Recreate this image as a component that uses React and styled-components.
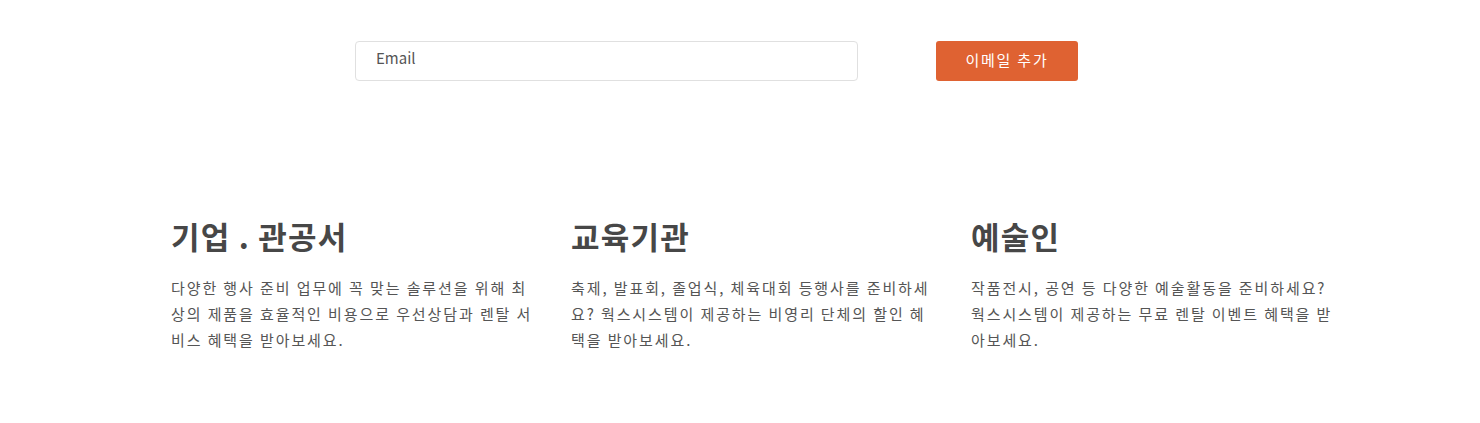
import React from "react";
import styled, { createGlobalStyle } from "styled-components";

const Global = createGlobalStyle`
  html, body { margin: 0; padding: 0; background: #fff; }
  body { font-family: "Noto Sans CJK KR", "Noto Sans", sans-serif; color: #555; }
  * { box-sizing: border-box; }
`;

const Page = styled.div`
  width: 1480px;
  height: 423px;
  display: flex;
  flex-direction: column;
  align-items: center;
`;

const Container = styled.div`
  width: 1200px;
`;

const SubscribeRow = styled.form`
  margin: 41px 0 0;
  padding-left: 215px;
  display: flex;
  align-items: center;
  gap: 78px;
`;

const EmailInput = styled.input`
  width: 503px;
  height: 40px;
  border: 1px solid #e0e0e0;
  border-radius: 4px;
  padding: 0 20px 8px;
  font-family: "Noto Sans CJK KR", "Noto Sans", sans-serif;
  font-size: 15px;
  color: #555;
  outline: none;
  &::placeholder { color: #555; }
`;

const AddButton = styled.button`
  width: 142px;
  height: 40px;
  border: none;
  border-radius: 3px;
  background: #df6232;
  color: #fff;
  font-family: "Noto Sans CJK KR", "Noto Sans", sans-serif;
  font-size: 15px;
  letter-spacing: 1.8px;
  padding: 0 0 4px;
  cursor: pointer;
`;

const Columns = styled.div`
  margin-top: 133px;
  padding-left: 31px;
  display: grid;
  grid-template-columns: repeat(3, 400px);
`;

const Column = styled.div`
  width: 370px;
`;

const Title = styled.h3`
  margin: 0 0 17px;
  font-size: 31px;
  font-weight: 700;
  letter-spacing: 1.2px;
  color: #474747;
  line-height: 44px;
`;

const Desc = styled.p`
  margin: 0;
  font-size: 15px;
  letter-spacing: 1.9px;
  line-height: 26px;
  color: #555;
`;

const items = [
  {
    title: "기업 . 관공서",
    desc: "다양한 행사 준비 업무에 꼭 맞는 솔루션을 위해 최상의 제품을 효율적인 비용으로 우선상담과 렌탈 서비스 혜택을 받아보세요.",
  },
  {
    title: "교육기관",
    desc: "축제, 발표회, 졸업식, 체육대회 등행사를 준비하세요? 웍스시스템이 제공하는 비영리 단체의 할인 혜택을 받아보세요.",
  },
  {
    title: "예술인",
    desc: "작품전시, 공연 등 다양한 예술활동을 준비하세요? 웍스시스템이 제공하는 무료 렌탈 이벤트 혜택을 받아보세요.",
  },
];

export default function App() {
  return (
    <>
      <Global />
      <Page>
        <Container>
          <SubscribeRow onSubmit={(e) => e.preventDefault()}>
            <EmailInput type="email" placeholder="Email" />
            <AddButton type="submit">이메일 추가</AddButton>
          </SubscribeRow>
          <Columns>
            {items.map((it) => (
              <Column key={it.title}>
                <Title>{it.title}</Title>
                <Desc>{it.desc}</Desc>
              </Column>
            ))}
          </Columns>
        </Container>
      </Page>
    </>
  );
}
